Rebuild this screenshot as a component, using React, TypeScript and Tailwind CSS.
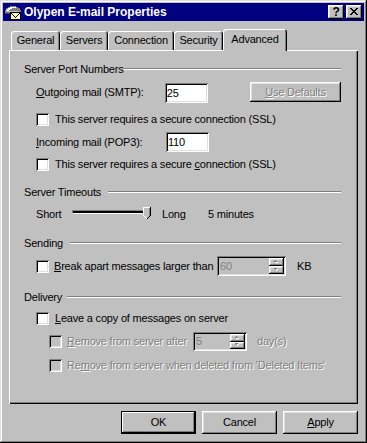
import React from "react";

const raised =
  "shadow-[inset_-1px_-1px_0_#000,inset_1px_1px_0_#fff,inset_-2px_-2px_0_#808080,inset_2px_2px_0_#dfdfdf]";
const sunken =
  "shadow-[inset_1px_1px_0_#808080,inset_-1px_-1px_0_#fff,inset_2px_2px_0_#000,inset_-2px_-2px_0_#dfdfdf]";
const dis = "text-[#808080] [text-shadow:1px_1px_0_#fff]";

function TitleIcon() {
  return (
    <svg width="16" height="16" viewBox="0 0 16 16" shapeRendering="crispEdges">
      <path d="M0 6h1V4h2V3h2V2h6v1h2v1h2v2h1v3H0z" fill="#808080" />
      <path d="M1 6h1V5h1V4h2V3h6v1H7v1H5v1H4v1H1z" fill="#fff" />
      <path d="M0 9h16v1H0z" fill="#404040" />
      <path d="M2 7h12v1H2z" fill="#c0c0c0" />
      <rect x="5" y="8" width="11" height="8" fill="#000" />
      <rect x="6" y="9" width="9" height="6" fill="#ffffc0" />
      <path d="M6 9h1v1h1v1h1v1h1v1h1v-1h1v-1h1v-1h1V9h1v1h-1v1h-1v1h-1v1h-1v1h-1v-1H9v-1H8v-1H7v-1H6z" fill="#000" />
    </svg>
  );
}

function XGlyph() {
  return (
    <svg width="8" height="7" viewBox="0 0 8 7" shapeRendering="crispEdges">
      <path
        d="M0 0h2v1h1v1h2V1h1V0h2v1H7v1H6v1H5v1h1v1h1v1h1v1H6V6H5V5H3v1H2v1H0V6h1V5h1V4h1V3H2V2H1V1H0z"
        fill="#000"
      />
    </svg>
  );
}

function Checkbox({ disabled }: { disabled?: boolean }) {
  return (
    <div
      className={`w-[13px] h-[13px] shrink-0 ${disabled ? "bg-[#c0c0c0]" : "bg-white"} ${sunken}`}
    />
  );
}

function Arrow({ up }: { up?: boolean }) {
  return (
    <svg width="6" height="4" viewBox="0 0 6 4" shapeRendering="crispEdges">
      {up ? (
        <>
          <path d="M2 1h1v1h1v1H1V2h1z" fill="#fff" />
          <path d="M1 0h1v1h1v1H0V1h1z" fill="#808080" />
        </>
      ) : (
        <>
          <path d="M1 1h3v1H3v1H2V2H1z" fill="#fff" />
          <path d="M0 0h3v1H2v1H1V1H0z" fill="#808080" />
        </>
      )}
    </svg>
  );
}

function Spin({ w, h, value }: { w: string; h: string; value: string }) {
  return (
    <div className={`${w} ${h} shrink-0 flex bg-[#c0c0c0] ${sunken}`}>
      <span className="flex-1 pl-[3px] flex items-center text-[#808080]">{value}</span>
      <div className="flex flex-col w-[15px] my-[2px] mr-[2px]">
        <div className={`flex-1 bg-[#c0c0c0] flex items-center justify-center ${raised}`}>
          <Arrow up />
        </div>
        <div className={`flex-1 bg-[#c0c0c0] flex items-center justify-center ${raised}`}>
          <Arrow />
        </div>
      </div>
    </div>
  );
}

function Field({ value, extra }: { value: string; extra?: string }) {
  return (
    <div className={`w-[43px] h-[20px] shrink-0 bg-white flex items-center pl-[2px] ${sunken} ${extra ?? ""}`}>
      {value}
    </div>
  );
}

function Header({ label, w, mt }: { label: string; w: string; mt: string }) {
  return (
    <div className={`${mt} h-[14px] flex items-center`}>
      <span className={`${w} shrink-0 whitespace-nowrap`}>{label}</span>
      <div className="flex-1 h-[2px] border-t border-t-[#808080] border-b border-b-white" />
    </div>
  );
}

function Thumb() {
  return (
    <svg width="8" height="12" viewBox="0 0 8 12" shapeRendering="crispEdges">
      <polygon points="0,0 8,0 8,8 4,12 0,8" fill="#c0c0c0" />
      <path d="M0 0h7v1H1v8H0z" fill="#fff" />
      <path d="M1 9h1v1h1v1h1v1H3v-1H2v-1H1z" fill="#fff" />
      <path d="M7 0h1v9H7z" fill="#000" />
      <path d="M6 1h1v8H6z" fill="#808080" />
      <path d="M6 9h1v1H6v1H5v1H4v-1h1v-1h1z" fill="#000" />
    </svg>
  );
}

function Tab({ label, w }: { label: string; w: string }) {
  return (
    <div
      className={`${w} h-[19px] shrink-0 flex items-center justify-center rounded-t-[3px] shadow-[inset_1px_1px_0_#fff,inset_-1px_0_0_#000,inset_-2px_0_0_#808080]`}
    >
      {label}
    </div>
  );
}

function Btn({ children, def }: { children: React.ReactNode; def?: boolean }) {
  return (
    <div
      className={`w-[75px] h-[23px] flex items-center justify-center bg-[#c0c0c0] ${
        def
          ? "shadow-[inset_0_0_0_1px_#000,inset_-2px_-2px_0_#000,inset_2px_2px_0_#fff,inset_-3px_-3px_0_#808080]"
          : raised
      }`}
    >
      {children}
    </div>
  );
}

export default function App() {
  return (
    <div className="w-[367px] h-[443px] bg-[#c0c0c0] p-[3px] flex flex-col font-['Liberation_Sans',Arial,sans-serif] text-[11px] leading-[13px] tracking-[-0.2px] text-black shadow-[inset_-1px_-1px_0_#000,inset_1px_1px_0_#dfdfdf,inset_-2px_-2px_0_#808080,inset_2px_2px_0_#fff]">
      {/* Title bar */}
      <div className="h-[18px] shrink-0 bg-[#000080] flex items-center pl-[2px] pr-[2px]">
        <TitleIcon />
        <span className="ml-[3px] text-white font-bold text-[12px] tracking-normal leading-none">
          Olypen E-mail Properties
        </span>
        <div className="ml-auto flex gap-[2px]">
          <div className={`w-[16px] h-[14px] bg-[#c0c0c0] flex items-center justify-center font-bold text-[12px] leading-none pb-[1px] ${raised}`}>
            ?
          </div>
          <div className={`w-[16px] h-[14px] bg-[#c0c0c0] flex items-center justify-center pb-[1px] ${raised}`}>
            <XGlyph />
          </div>
        </div>
      </div>

      <div className="px-[6px] flex flex-col">
        {/* Tabs */}
        <div className="mt-[8px] h-[21px] flex items-end pl-[2px]">
          <Tab label="General" w="w-[49px]" />
          <Tab label="Servers" w="w-[48px]" />
          <Tab label="Connection" w="w-[66px]" />
          <Tab label="Security" w="w-[49px]" />
          <div className="w-[64px] h-[22px] -mb-[1px] relative z-10 bg-[#c0c0c0] flex items-center justify-center pb-[2px] rounded-t-[3px] shadow-[inset_1px_1px_0_#fff,inset_-1px_0_0_#000,inset_-2px_0_0_#808080]">
            Advanced
          </div>
        </div>

        {/* Panel */}
        <div className="h-[354px] flex flex-col pl-[15px] pr-[17px] shadow-[inset_1px_1px_0_#fff,inset_-1px_-1px_0_#000,inset_-2px_-2px_0_#808080]">
          <Header mt="mt-[12px]" label="Server Port Numbers" w="w-[100px]" />

          <div className="mt-[6px] ml-[12px] h-[21px] flex items-start">
            <span className="w-[130px] h-[21px] flex items-center">
              <span className="underline">O</span>utgoing mail (SMTP):
            </span>
            <Field value="25" extra="mt-[1px]" />
            <div className={`ml-[42px] w-[92px] h-[20px] flex items-center justify-center ${raised} ${dis}`}>
              <span className="underline">U</span>se Defaults
            </div>
          </div>

          <div className="mt-[10px] ml-[12px] h-[13px] flex items-center">
            <Checkbox />
            <span className="ml-[6px]">This server requires a secure connection (SSL)</span>
          </div>

          <div className="mt-[6px] ml-[12px] h-[20px] flex items-center">
            <span className="w-[130px]">
              <span className="underline">I</span>ncoming mail (POP3):
            </span>
            <Field value="110" />
          </div>

          <div className="mt-[6px] ml-[12px] h-[13px] flex items-center">
            <Checkbox />
            <span className="ml-[6px]">
              This server requires a secure <span className="underline">c</span>onnection (SSL)
            </span>
          </div>

          <Header mt="mt-[14px]" label="Server Timeouts" w="w-[84px]" />

          <div className="mt-[8px] ml-[12px] h-[14px] flex items-center">
            <span className="w-[36px]">Short</span>
            <div className="relative w-[80px] h-[14px] flex flex-col pt-[3px]">
              <div className="w-[77px] h-[4px] bg-black border-t border-t-[#808080] border-l border-l-[#808080] border-b border-b-white border-r border-r-white" />
              <div className="absolute left-[71px] top-0">
                <Thumb />
              </div>
            </div>
            <span className="ml-[10px] w-[46px]">Long</span>
            <span>5 minutes</span>
          </div>

          <Header mt="mt-[15px]" label="Sending" w="w-[46px]" />

          <div className="mt-[6px] ml-[12px] h-[20px] flex items-center">
            <Checkbox />
            <span className="ml-[5px] w-[163px] whitespace-nowrap">
              <span className="underline">B</span>reak apart messages larger than
            </span>
            <Spin w="w-[69px]" h="h-[20px]" value="60" />
            <span className="ml-[11px]">KB</span>
          </div>

          <Header mt="mt-[14px]" label="Delivery" w="w-[43px]" />

          <div className="mt-[8px] ml-[12px] h-[13px] flex items-center">
            <Checkbox />
            <span className="ml-[6px]">
              <span className="underline">L</span>eave a copy of messages on server
            </span>
          </div>

          <div className="mt-[7px] ml-[25px] h-[19px] flex items-center">
            <Checkbox disabled />
            <span className={`ml-[5px] w-[126px] whitespace-nowrap ${dis}`}>
              <span className="underline">R</span>emove from server after
            </span>
            <Spin w="w-[54px]" h="h-[19px]" value="5" />
            <span className={`ml-[10px] ${dis}`}>day(s)</span>
          </div>

          <div className="mt-[8px] ml-[25px] h-[13px] flex items-center">
            <Checkbox disabled />
            <span className={`ml-[5px] whitespace-nowrap ${dis}`}>
              Re<span className="underline">m</span>ove from server when deleted from 'Deleted Items'
            </span>
          </div>
        </div>

        {/* Buttons */}
        <div className="mt-[7px] flex justify-end gap-[6px]">
          <Btn def>OK</Btn>
          <Btn>Cancel</Btn>
          <Btn>
            <span>
              <span className="underline">A</span>pply
            </span>
          </Btn>
        </div>
      </div>
    </div>
  );
}
